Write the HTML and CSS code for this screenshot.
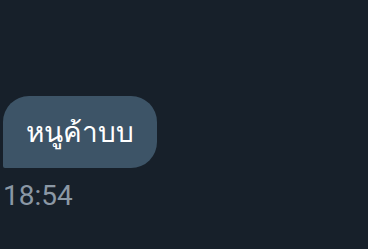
FILE: index.html
```html
<!DOCTYPE html>
<html lang="th">
<head>
  <meta charset="UTF-8">
  <title>Message</title>
  <link rel="stylesheet" href="styles.css">
</head>
<body>
  <div class="thread">
    <div class="message">
      <div class="bubble">หนูค้าบบ</div>
      <div class="time">18:54</div>
    </div>
  </div>
</body>
</html>
```

FILE: styles.css
```css
html, body { margin: 0; height: 100%; }
body {
  background: #17202a;
  font-family: Roboto, "Noto Sans", sans-serif;
  overflow: hidden;
}
.thread { padding: 96px 0 0 3px; }
.message { display: flex; flex-direction: column; align-items: flex-start; }
.bubble {
  background: #3d5467;
  color: #ffffff;
  font-size: 28px;
  height: 72px;
  box-sizing: border-box;
  width: 154px;
  display: flex;
  align-items: center;
  justify-content: center;
  border-radius: 26px 26px 26px 2px;
}
.time {
  color: #8b98a5;
  font-size: 28px;
  margin-top: 12px;
  line-height: 32px;
}
```
